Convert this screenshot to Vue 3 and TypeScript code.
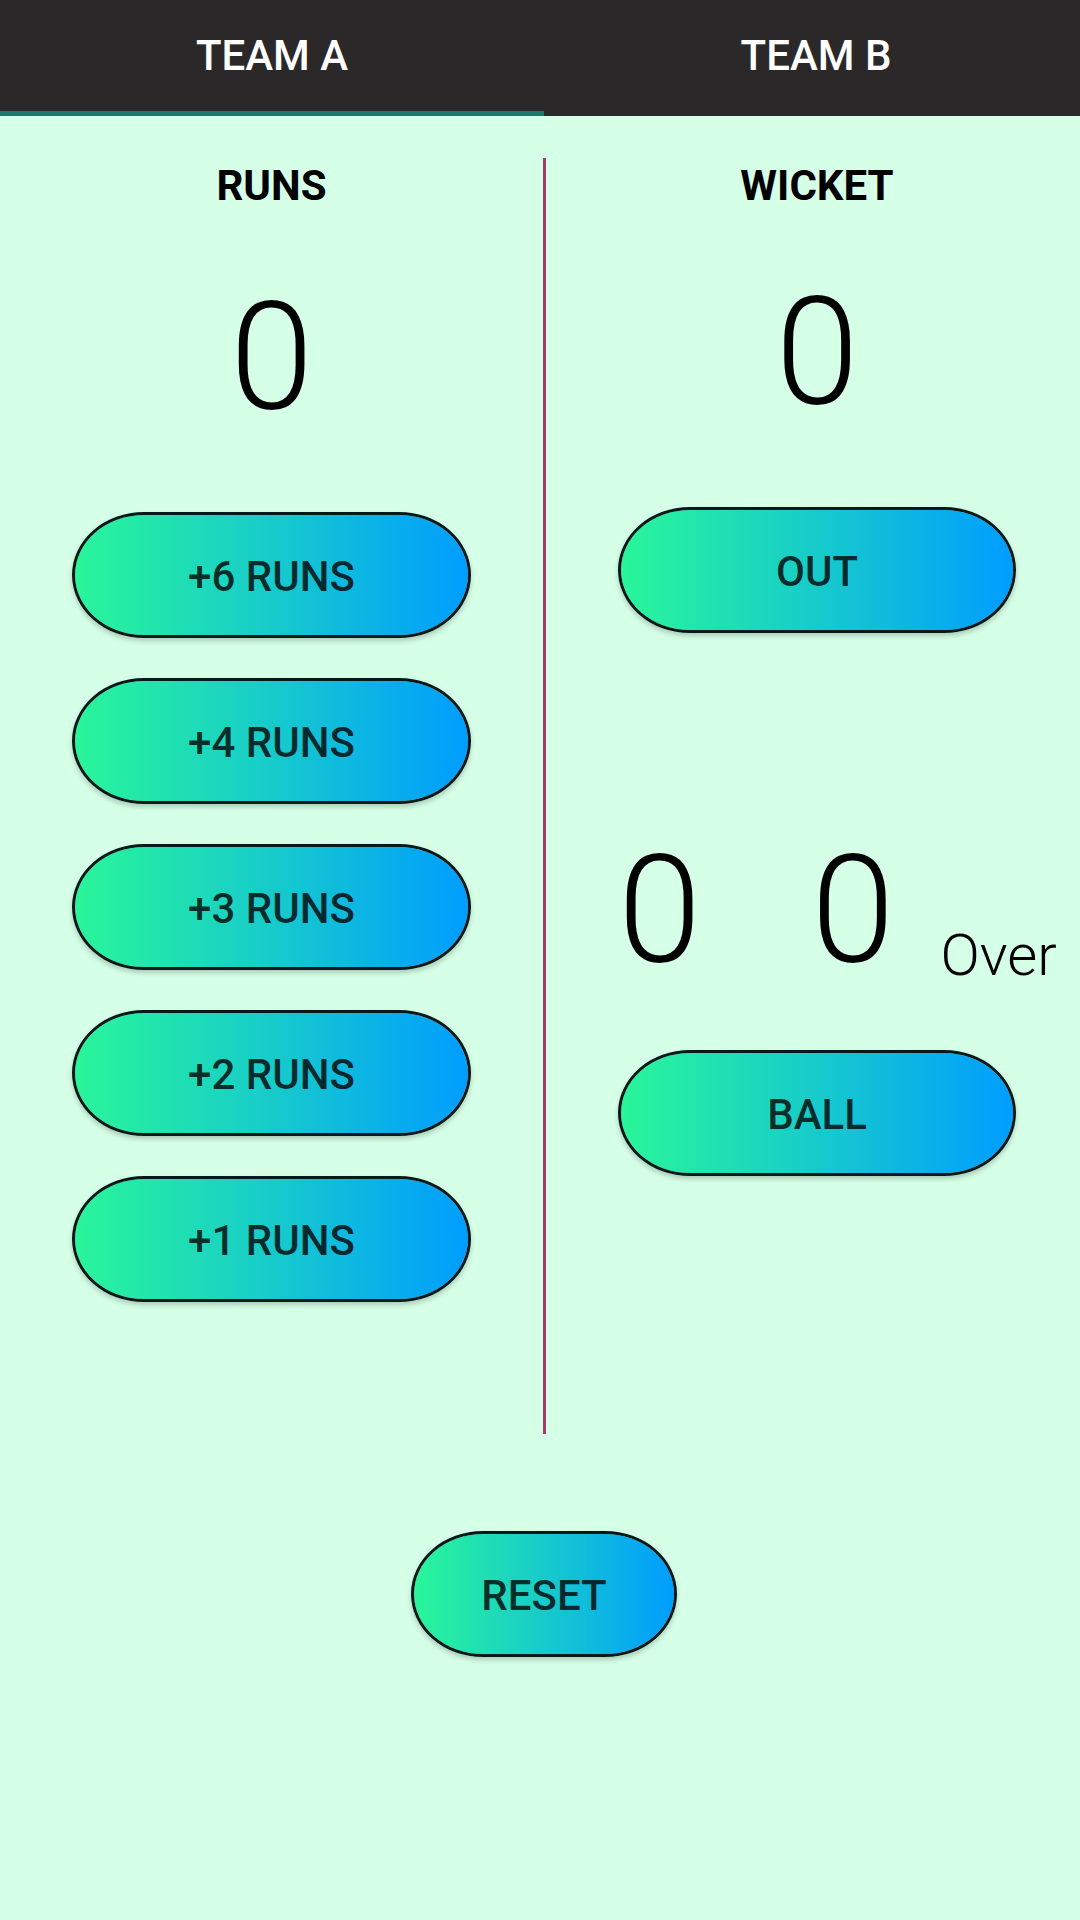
<script setup lang="ts">
import { ref } from 'vue'

interface Score {
  runs: number
  wickets: number
  overs: number
  balls: number
}

const teams = ['TEAM A', 'TEAM B']
const runOptions = [6, 4, 3, 2, 1]
const BALLS_PER_OVER = 6

const emptyScore = (): Score => ({ runs: 0, wickets: 0, overs: 0, balls: 0 })

const active = ref(0)
const scores = ref<Score[]>(teams.map(emptyScore))

function addRuns(runs: number) {
  scores.value[active.value].runs += runs
}

function addWicket() {
  const score = scores.value[active.value]
  if (score.wickets < 10) score.wickets++
}

function addBall() {
  const score = scores.value[active.value]
  score.balls++
  if (score.balls === BALLS_PER_OVER) {
    score.balls = 0
    score.overs++
  }
}

function reset() {
  scores.value[active.value] = emptyScore()
}
</script>

<template>
  <div class="app">
    <nav class="tabs" role="tablist">
      <button
        v-for="(team, index) in teams"
        :key="team"
        class="tab"
        :class="{ active: active === index }"
        type="button"
        role="tab"
        :aria-selected="active === index"
        @click="active = index"
      >
        {{ team }}
      </button>
    </nav>

    <main>
      <div class="board">
        <section class="column">
          <h2 class="heading">RUNS</h2>
          <output class="score">{{ scores[active].runs }}</output>
          <div class="actions">
            <button
              v-for="runs in runOptions"
              :key="runs"
              class="pill"
              type="button"
              @click="addRuns(runs)"
            >
              +{{ runs }} RUNS
            </button>
          </div>
        </section>

        <div class="divider"></div>

        <section class="column side">
          <h2 class="heading">WICKET</h2>
          <output class="score">{{ scores[active].wickets }}</output>
          <div class="actions">
            <button class="pill" type="button" @click="addWicket">OUT</button>
          </div>
          <div class="overs">
            <output class="digit">{{ scores[active].overs }}</output>
            <output class="digit">{{ scores[active].balls }}</output>
            <span class="unit">Over</span>
          </div>
          <button class="pill" type="button" @click="addBall">BALL</button>
        </section>
      </div>

      <div class="footer">
        <button class="pill small" type="button" @click="reset">RESET</button>
      </div>
    </main>
  </div>
</template>

<style>
html,
body {
  background: #d5ffe6;
}
</style>

<style scoped>
.app {
  min-height: 100vh;
  background: #d5ffe6;
  color: #000;
  font-family: Roboto, "Liberation Sans", sans-serif;
}

button {
  margin: 0;
  font-family: inherit;
  cursor: pointer;
}

.tabs {
  display: flex;
  background: #2b2829;
}

.tab {
  flex: 1;
  height: 116px;
  padding: 0 0 0 8px;
  border: 0;
  border-bottom: 5px solid transparent;
  background: none;
  color: #fff;
  font-size: 42px;
  font-weight: 500;
}

.tab:first-child {
  flex: 0 0 auto;
  width: calc(50% + 4px);
  padding: 0;
}

.tab.active {
  border-bottom-color: #1f766b;
}

.board {
  display: flex;
  padding-top: 42px;
}

.column {
  flex: 1;
  min-width: 0;
  box-sizing: border-box;
  padding: 0 72px 132px;
}

.column:first-child {
  flex: 0 0 auto;
  width: calc(50% + 3px);
}

.side {
  padding-right: 64px;
}

.divider {
  flex: none;
  width: 3px;
  background: #a43c6b;
}

.heading {
  margin: 0;
  font-size: 42px;
  font-weight: 700;
  line-height: 56px;
  text-align: center;
}

.score,
.digit {
  font-size: 150px;
  font-weight: 300;
  line-height: 176px;
}

.score {
  display: block;
  margin: 56px 0 66px;
  text-align: center;
}

.side .score {
  margin-top: 51px;
}

.actions {
  display: flex;
  flex-direction: column;
  gap: 40px;
}

.pill {
  display: block;
  width: 100%;
  height: 126px;
  padding: 2px 0 0;
  border: 3px solid #07191a;
  border-radius: 72px / 63px;
  background: linear-gradient(90deg, #29f699, #17cbcb 50%, #009dff) padding-box;
  box-shadow: 0 3px 5px rgba(0, 0, 0, 0.2);
  color: rgba(0, 0, 0, 0.8);
  font-size: 42px;
  font-weight: 500;
}

.small {
  width: 266px;
}

.overs {
  display: flex;
  align-items: flex-end;
  margin: 190px -64px 51px 0;
}

.digit + .digit {
  margin-left: 110px;
}

.unit {
  margin: 0 0 12px 46px;
  font-size: 58px;
  font-weight: 300;
  line-height: 64px;
}

.footer {
  display: flex;
  justify-content: center;
  padding: 97px 0 64px 8px;
}
</style>
